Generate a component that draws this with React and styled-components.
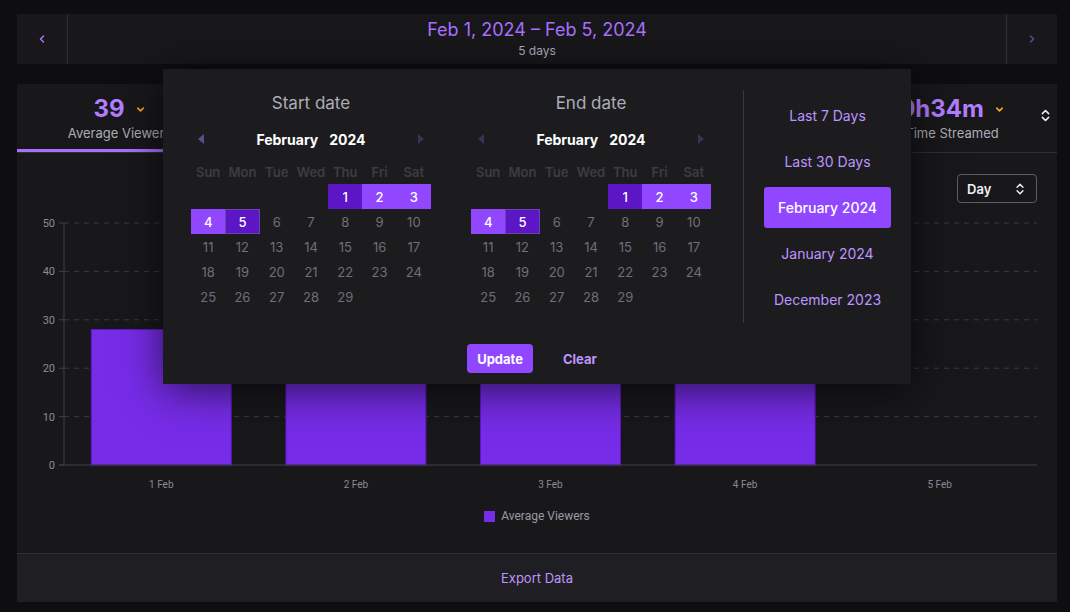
import styled, { createGlobalStyle } from 'styled-components';
import { ChevronLeft, ChevronRight, ChevronDown, ChevronsUpDown } from 'lucide-react';

const GlobalStyle = createGlobalStyle`
  * { box-sizing: border-box; }
  body {
    margin: 0;
    background: #0e0e10;
    font-family: Inter, "Noto Sans", sans-serif;
    color: #efeff1;
  }
`;

const Page = styled.div`
  position: relative;
  padding: 14px 13px 10px 17px;
`;

const TopBar = styled.div`
  display: flex;
  height: 50px;
  background: #18181b;
`;

const NavButton = styled.div`
  width: 51px;
  display: flex;
  align-items: center;
  justify-content: center;
  color: ${(p) => (p.$dim ? '#5f4a8f' : '#a970ff')};
  border-${(p) => (p.$side === 'left' ? 'right' : 'left')}: 1px solid #2f2f35;
`;

const RangeTitle = styled.div`
  flex: 1;
  display: flex;
  flex-direction: column;
  align-items: center;
  justify-content: center;
`;

const RangeText = styled.div`
  font-size: 18px;
  line-height: 22px;
  color: #a970ff;
`;

const RangeSub = styled.div`
  font-size: 12px;
  line-height: 16px;
  color: #adadb8;
  margin-top: 2px;
`;

const Card = styled.div`
  margin-top: 20px;
  height: 518px;
  background: #18181b;
  display: flex;
  flex-direction: column;
`;

const Tabs = styled.div`
  display: grid;
  grid-template-columns: 205px 1fr 162px 24px;
  height: 69px;
  border-bottom: 1px solid #2f2f35;
`;

const Tab = styled.div`
  display: flex;
  flex-direction: column;
  align-items: center;
  justify-content: center;
  box-shadow: ${(p) => (p.$active ? 'inset 0 -3px 0 #a970ff' : 'none')};
`;

const StatValue = styled.div`
  display: flex;
  align-items: center;
  gap: 10px;
  font-size: 24px;
  font-weight: 700;
  line-height: 30px;
  color: #b17eff;
`;

const StatLabel = styled.div`
  font-size: 13px;
  line-height: 18px;
  color: #adadb8;
`;

const TabIcon = styled.div`
  display: flex;
  align-items: center;
  justify-content: center;
  color: #efeff1;
  padding-bottom: 6px;
`;

const ChartSection = styled.div`
  flex: 1;
  padding: 21px 20px 0;
  display: flex;
  flex-direction: column;
`;

const ChartHeader = styled.div`
  display: flex;
  justify-content: flex-end;
`;

const Select = styled.div`
  width: 80px;
  height: 29px;
  border: 1px solid #5c5c66;
  border-radius: 4px;
  padding: 0 9px;
  display: flex;
  align-items: center;
  justify-content: space-between;
  font-size: 13px;
  font-weight: 600;
  color: #efeff1;
`;

const ChartSvg = styled.svg`
  display: block;
  margin-top: 8px;
  font-family: Roboto, "Liberation Sans", sans-serif;
`;

const Legend = styled.div`
  display: flex;
  align-items: center;
  justify-content: center;
  gap: 6px;
  margin-top: 8px;
  font-family: Roboto, "Liberation Sans", sans-serif;
  font-size: 12px;
  color: #9a9aa5;
`;

const Swatch = styled.span`
  width: 11px;
  height: 11px;
  background: #772ce8;
`;

const Footer = styled.div`
  height: 49px;
  border-top: 1px solid #2f2f35;
  background: #1f1f23;
  display: flex;
  align-items: center;
  justify-content: center;
  font-size: 13px;
  color: #bf94ff;
`;

const Popover = styled.div`
  position: absolute;
  top: 69px;
  left: 163px;
  width: 748px;
  height: 315px;
  background: #1c1c1f;
  box-shadow: 0 6px 40px rgba(0, 0, 0, 0.65);
  z-index: 10;
  display: flex;
  flex-direction: column;
`;

const PopoverBody = styled.div`
  display: flex;
  padding: 21px 0 0 28px;
`;

const Calendars = styled.div`
  display: flex;
  gap: 40px;
`;

const Divider = styled.div`
  width: 1px;
  background: #3a3a40;
  margin-left: 32px;
`;

const Presets = styled.div`
  width: 167px;
  padding: 5px 20px 3px;
  display: flex;
  flex-direction: column;
  gap: 5px;
`;

const Preset = styled.div`
  height: 41px;
  border-radius: 3px;
  display: flex;
  align-items: center;
  justify-content: center;
  font-size: 14px;
  font-weight: ${(p) => (p.$selected ? 500 : 400)};
  color: ${(p) => (p.$selected ? '#ffffff' : '#bf94ff')};
  background: ${(p) => (p.$selected ? '#9147ff' : 'transparent')};
`;

const Calendar = styled.div`
  width: 240px;
`;

const CalTitle = styled.div`
  text-align: center;
  font-size: 17px;
  line-height: 26px;
  color: #adadb8;
`;

const MonthRow = styled.div`
  margin-top: 12px;
  height: 22px;
  padding: 0 7px;
  display: flex;
  align-items: center;
  justify-content: space-between;
`;

const MonthLabel = styled.div`
  display: flex;
  gap: 11px;
  font-size: 14px;
  font-weight: 700;
  color: #ffffff;
`;

const Caret = styled.svg`
  display: block;
  fill: ${(p) => (p.$bright ? '#5e4a8c' : '#3a3452')};
`;

const WeekRow = styled.div`
  margin-top: 9px;
  display: grid;
  grid-template-columns: repeat(7, 1fr);
  height: 25px;
  align-items: center;
  text-align: center;
  font-size: 13px;
  font-weight: 600;
  color: #3c3c43;
`;

const DaysGrid = styled.div`
  display: grid;
  grid-template-columns: repeat(7, 1fr);
  grid-auto-rows: 25px;
`;

const dayBg = { start: '#5c16c5', range: '#9147ff', end: '#5c16c5' };

const Day = styled.div`
  display: flex;
  align-items: center;
  justify-content: center;
  font-size: 13px;
  font-weight: ${(p) => (p.$kind ? 500 : 400)};
  color: ${(p) => (p.$kind ? '#ffffff' : '#6f6f79')};
  background: ${(p) => (p.$kind ? dayBg[p.$kind] : 'transparent')};
  border: ${(p) => (p.$kind === 'end' ? '1px solid #6a45b0' : 'none')};
`;

const Actions = styled.div`
  margin-top: 21px;
  display: flex;
  justify-content: center;
  gap: 20px;
`;

const ActionButton = styled.div`
  height: 29px;
  padding: 0 10px;
  border-radius: 4px;
  display: flex;
  align-items: center;
  font-size: 13px;
  font-weight: 700;
  color: ${(p) => (p.$primary ? '#ffffff' : '#bf94ff')};
  background: ${(p) => (p.$primary ? '#9147ff' : 'transparent')};
`;

const WEEKDAYS = ['Sun', 'Mon', 'Tue', 'Wed', 'Thu', 'Fri', 'Sat'];
const KINDS = { 1: 'start', 2: 'range', 3: 'range', 4: 'range', 5: 'end' };
const PRESETS = ['Last 7 Days', 'Last 30 Days', 'February 2024', 'January 2024', 'December 2023'];
const BARS = [
  { label: '1 Feb', value: 28 },
  { label: '2 Feb', value: 30 },
  { label: '3 Feb', value: 27 },
  { label: '4 Feb', value: 29 },
  { label: '5 Feb', value: 0 },
];

const CaretIcon = ({ dir, bright }) => (
  <Caret width="6" height="10" viewBox="0 0 6 10" $bright={bright}>
    {dir === 'left' ? <polygon points="6,0 6,10 0,5" /> : <polygon points="0,0 0,10 6,5" />}
  </Caret>
);

const MonthCalendar = ({ title, brightLeft }) => {
  const cells = [null, null, null, null];
  for (let d = 1; d <= 29; d++) cells.push(d);
  return (
    <Calendar>
      <CalTitle>{title}</CalTitle>
      <MonthRow>
        <CaretIcon dir="left" bright={brightLeft} />
        <MonthLabel>
          <span>February</span>
          <span>2024</span>
        </MonthLabel>
        <CaretIcon dir="right" />
      </MonthRow>
      <WeekRow>
        {WEEKDAYS.map((w) => (
          <span key={w}>{w}</span>
        ))}
      </WeekRow>
      <DaysGrid>
        {cells.map((d, i) => (
          <Day key={i} $kind={d ? KINDS[d] : undefined}>
            {d}
          </Day>
        ))}
      </DaysGrid>
    </Calendar>
  );
};

const Chart = () => {
  const left = 27;
  const right = 1000;
  const zero = 254;
  const unit = 4.84;
  const col = (right - left) / BARS.length;
  return (
    <ChartSvg width="1000" height="290">
      {[10, 20, 30, 40, 50].map((v) => (
        <line
          key={v}
          x1={left}
          x2={right}
          y1={zero - v * unit}
          y2={zero - v * unit}
          stroke="#3a3a40"
          strokeDasharray="5 5"
        />
      ))}
      {[0, 10, 20, 30, 40, 50].map((v) => (
        <g key={v}>
          <line x1={left - 5} x2={left} y1={zero - v * unit} y2={zero - v * unit} stroke="#3f3f46" />
          <text x={left - 9} y={zero - v * unit + 4} textAnchor="end" fontSize="11" fill="#8a8a95">
            {v}
          </text>
        </g>
      ))}
      {BARS.map((b, i) => {
        const cx = left + col * (i + 0.5);
        return (
          <g key={b.label}>
            {b.value > 0 && (
              <rect
                x={cx - 70}
                y={zero - b.value * unit}
                width="140"
                height={b.value * unit}
                fill="#772ce8"
                stroke="#5c16c5"
              />
            )}
            <text x={cx} y={zero + 23} textAnchor="middle" fontSize="10" fill="#8a8a95">
              {b.label}
            </text>
          </g>
        );
      })}
      <line x1={left} x2={left} y1={12} y2={zero} stroke="#3f3f46" />
      <line x1={left - 5} x2={right} y1={zero} y2={zero} stroke="#3f3f46" />
    </ChartSvg>
  );
};

const App = () => (
  <Page>
    <GlobalStyle />
    <TopBar>
      <NavButton $side="left">
        <ChevronLeft size={12} strokeWidth={3} />
      </NavButton>
      <RangeTitle>
        <RangeText>Feb 1, 2024 – Feb 5, 2024</RangeText>
        <RangeSub>5 days</RangeSub>
      </RangeTitle>
      <NavButton $side="right" $dim>
        <ChevronRight size={12} strokeWidth={3} />
      </NavButton>
    </TopBar>

    <Card>
      <Tabs>
        <Tab $active>
          <StatValue>
            39 <ChevronDown size={11} strokeWidth={3.5} color="#f5a623" />
          </StatValue>
          <StatLabel>Average Viewers</StatLabel>
        </Tab>
        <Tab />
        <Tab>
          <StatValue>
            0h34m <ChevronDown size={11} strokeWidth={3.5} color="#f5a623" />
          </StatValue>
          <StatLabel>Time Streamed</StatLabel>
        </Tab>
        <TabIcon>
          <ChevronsUpDown size={15} strokeWidth={2.5} />
        </TabIcon>
      </Tabs>

      <ChartSection>
        <ChartHeader>
          <Select>
            Day
            <ChevronsUpDown size={14} strokeWidth={2.5} />
          </Select>
        </ChartHeader>
        <Chart />
        <Legend>
          <Swatch />
          Average Viewers
        </Legend>
      </ChartSection>

      <Footer>Export Data</Footer>
    </Card>

    <Popover>
      <PopoverBody>
        <Calendars>
          <MonthCalendar title="Start date" brightLeft />
          <MonthCalendar title="End date" />
        </Calendars>
        <Divider />
        <Presets>
          {PRESETS.map((p) => (
            <Preset key={p} $selected={p === 'February 2024'}>
              {p}
            </Preset>
          ))}
        </Presets>
      </PopoverBody>
      <Actions>
        <ActionButton $primary>Update</ActionButton>
        <ActionButton>Clear</ActionButton>
      </Actions>
    </Popover>
  </Page>
);

export default App;
